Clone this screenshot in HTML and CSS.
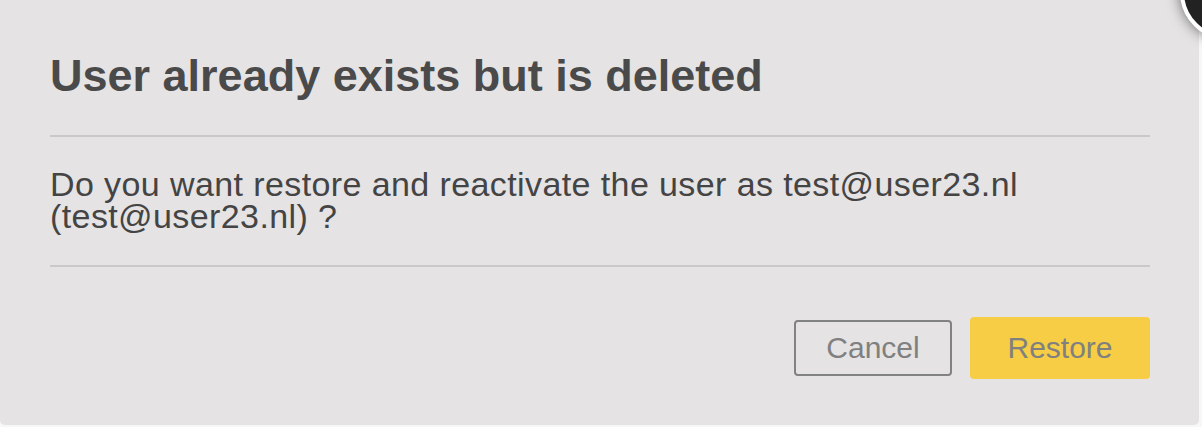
FILE: index.html
```html
<!DOCTYPE html>
<html lang="en">
<head>
<meta charset="utf-8">
<title>User already exists but is deleted</title>
<link rel="stylesheet" href="styles.css">
</head>
<body>
<div class="dialog">
  <h1 class="title">User already exists but is deleted</h1>
  <div class="rule"></div>
  <p class="message">Do you want restore and reactivate the user as test@user23.nl (test@user23.nl) ?</p>
  <div class="rule"></div>
  <div class="actions">
    <button class="btn btn-cancel" type="button">Cancel</button>
    <button class="btn btn-restore" type="button">Restore</button>
  </div>
</div>
<div class="close-clip"><div class="close-btn"></div></div>
</body>
</html>
```

FILE: styles.css
```css
html, body {
  margin: 0;
  padding: 0;
  overflow: hidden;
  background: #f7f7f7;
  font-family: "Liberation Sans", Arial, Helvetica, sans-serif;
}

.dialog {
  box-sizing: border-box;
  width: 1199px;
  height: 425px;
  background: #e5e3e4;
  border-radius: 0 0 5px 5px;
  padding: 50px 49px 0 50px;
  display: flex;
  flex-direction: column;
}

.title {
  margin: 0;
  font-size: 45px;
  line-height: 52px;
  font-weight: bold;
  color: #4a4a4a;
}

.rule {
  height: 2px;
  background: #cac8c9;
}

.title + .rule {
  margin-top: 33px;
}

.message {
  margin: 31px 0 33px;
  font-size: 34px;
  line-height: 32px;
  letter-spacing: 0.4px;
  color: #444444;
}

.actions {
  margin-top: 50px;
  display: flex;
  justify-content: flex-end;
  align-items: center;
  gap: 18px;
}

.btn {
  font-family: "Liberation Sans", Arial, Helvetica, sans-serif;
  font-size: 30px;
  color: #808080;
  border-radius: 4px;
  padding: 0;
  cursor: pointer;
}

.btn-cancel {
  width: 158px;
  height: 56px;
  background: transparent;
  border: 2px solid #828282;
}

.btn-restore {
  width: 180px;
  height: 62px;
  background: #f6cd45;
  border: none;
}

.close-clip {
  position: absolute;
  top: 0;
  right: 0;
  width: 50px;
  height: 60px;
  overflow: hidden;
}

.close-btn {
  position: absolute;
  left: 28px;
  top: -56px;
  width: 88px;
  height: 88px;
  border-radius: 50%;
  background: #222222;
  border: 4px solid #ffffff;
  box-shadow: 0 0 14px rgba(0, 0, 0, 0.55);
}
```
